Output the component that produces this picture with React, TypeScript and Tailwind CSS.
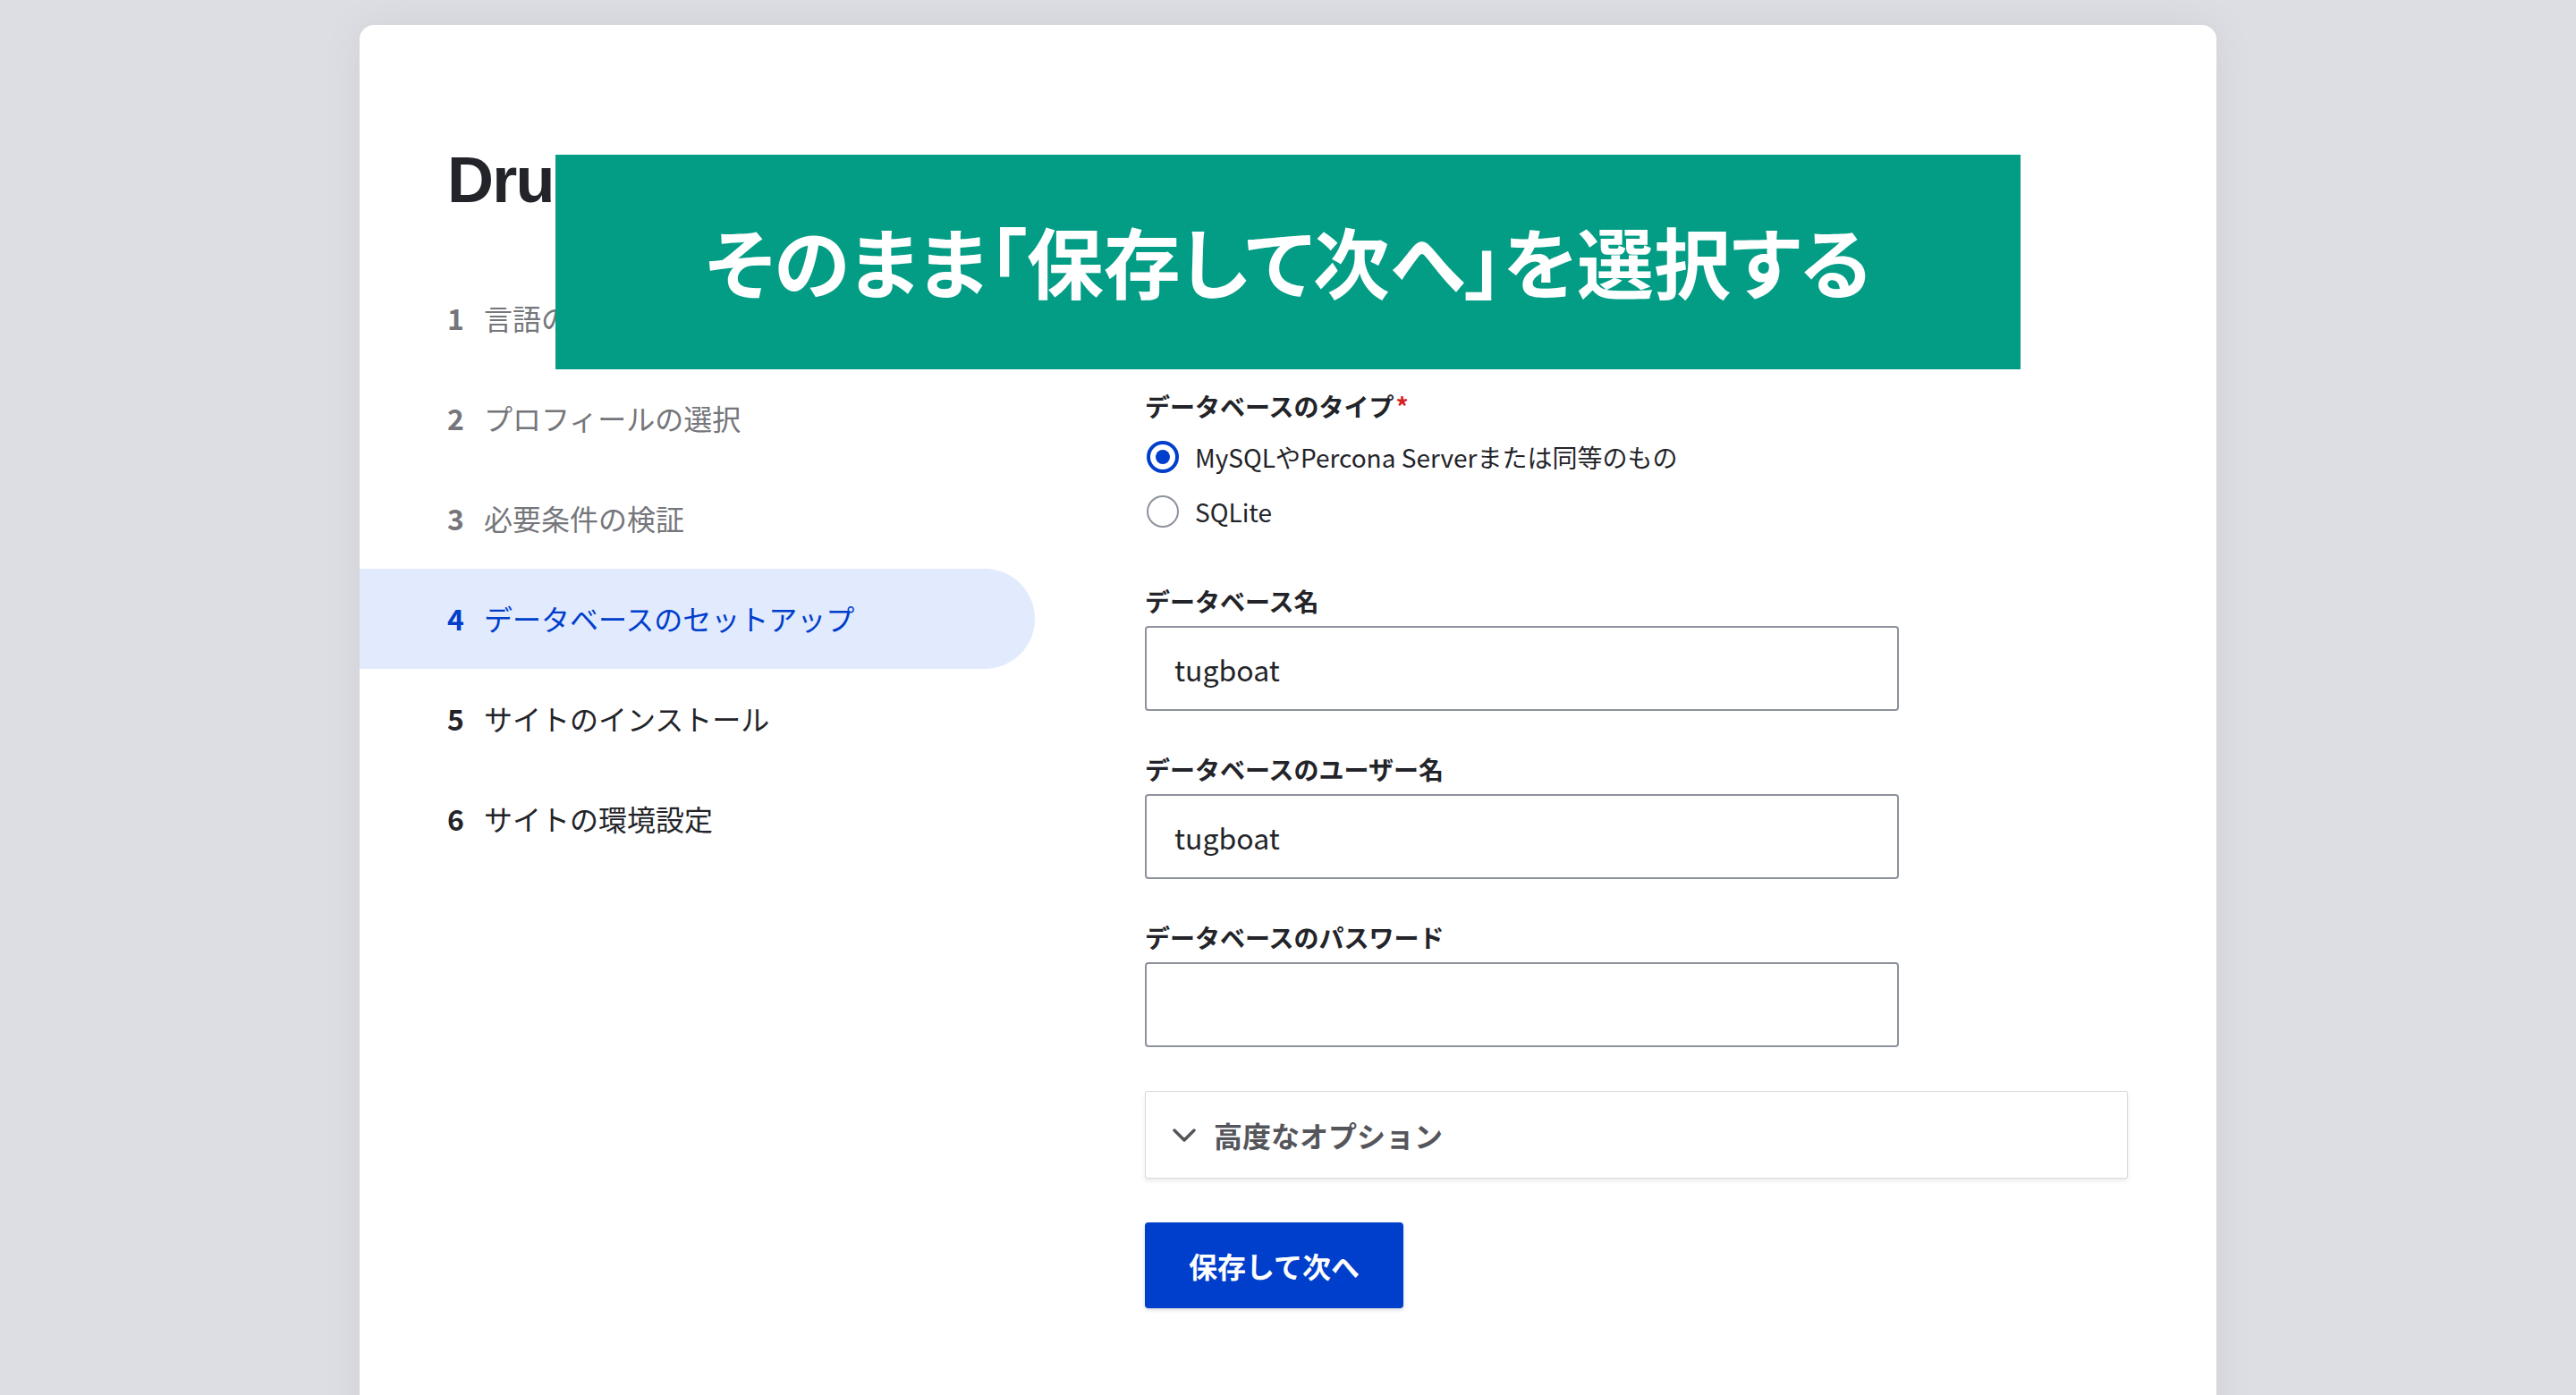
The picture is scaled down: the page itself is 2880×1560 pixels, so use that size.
import React from "react";

// Drupal installer — database setup step, with a tutorial banner laid over it

const STEPS = [
  { n: 1, label: "言語の選択", state: "done" },
  { n: 2, label: "プロフィールの選択", state: "done" },
  { n: 3, label: "必要条件の検証", state: "done" },
  { n: 4, label: "データベースのセットアップ", state: "active" },
  { n: 5, label: "サイトのインストール", state: "todo" },
  { n: 6, label: "サイトの環境設定", state: "todo" },
];

function StepItem({ n, label, state }: { n: number; label: string; state: string }) {
  const tone =
    state === "active"
      ? "bg-[#e2eafd] rounded-r-full text-[#003ecc]"
      : state === "done"
        ? "text-[#75767b]"
        : "text-[#232429]";
  return (
    <li className={`flex items-center h-[112px] pl-[98px] pb-[3px] text-[32px] ${tone}`}>
      <span className="font-semibold mr-[22px]">{n}</span>
      <span>{label}</span>
    </li>
  );
}

function Field({ label, value }: { label: string; value: string }) {
  return (
    <div className="mb-[45px]">
      <label className="block text-[28px] leading-[40px] font-bold text-[#232429] mb-[8px]">
        {label}
      </label>
      <div className="flex items-center w-[843px] h-[95px] border-2 border-[#8e929c] rounded-[4px] px-[31px] text-[32px] text-[#232429]">
        {value}
      </div>
    </div>
  );
}

export default function App() {
  return (
    <div className="h-[1560px] overflow-hidden bg-[#dddee3] pt-[28px] font-['Noto_Sans_CJK_JP',sans-serif]">
      <div className="relative mx-auto w-[2076px] h-[1600px] rounded-[16px] bg-white shadow-[0_0_50px_rgba(0,0,0,0.06)]">
        {/* Header */}
        <div className="pl-[98px] pt-[137px]">
          <h1 className="text-[72px] leading-[72px] font-bold tracking-tight text-[#232429] font-['Liberation_Sans',sans-serif]">
            Drupal
          </h1>
        </div>

        <div className="flex mt-[63px]">
          {/* Steps */}
          <nav className="w-[755px]">
            <ol>
              {STEPS.map((s) => (
                <StepItem key={s.n} {...s} />
              ))}
            </ol>
          </nav>

          {/* Form */}
          <form className="ml-[123px] pt-[134px] flex flex-col items-start">
            <div className="mb-[50px]">
              <div className="text-[28px] leading-[40px] font-bold text-[#232429] mb-[6px]">
                データベースのタイプ<span className="text-[#d72222] ml-[2px]">*</span>
              </div>
              <div className="flex items-center h-[61px] gap-[18px] pl-[2px]">
                <span className="flex items-center justify-center w-[36px] h-[36px] rounded-full border-[4px] border-[#003ecc]">
                  <span className="w-[16px] h-[16px] rounded-full bg-[#003ecc]" />
                </span>
                <span className="text-[28px] text-[#232429]">MySQLやPercona Serverまたは同等のもの</span>
              </div>
              <div className="flex items-center h-[61px] gap-[18px] pl-[2px]">
                <span className="w-[36px] h-[36px] rounded-full border-2 border-[#8e929c]" />
                <span className="text-[28px] text-[#232429]">SQLite</span>
              </div>
            </div>

            <Field label="データベース名" value="tugboat" />
            <Field label="データベースのユーザー名" value="tugboat" />
            <Field label="データベースのパスワード" value="" />

            <div className="flex items-center w-[1099px] h-[98px] mt-[4px] border border-[#d8d9e0] rounded-[2px] shadow-[0_3px_5px_rgba(0,0,0,0.08)] pl-[30px]">
              <svg width="26" height="15" viewBox="0 0 26 15" fill="none" className="mr-[20px]">
                <path d="M2 2 L13 13 L24 2" stroke="#55565b" strokeWidth="3.5" strokeLinecap="round" strokeLinejoin="round" />
              </svg>
              <span className="text-[32px] font-bold text-[#55565b]">高度なオプション</span>
            </div>

            <button
              type="button"
              className="mt-[49px] h-[96px] px-[49px] rounded-[4px] bg-[#003ecc] text-white text-[32px] font-bold shadow-[0_2px_4px_rgba(0,0,0,0.15)]"
            >
              保存して次へ
            </button>
          </form>
        </div>

        {/* Tutorial banner over the page */}
        <div className="absolute left-[219px] top-[145px] w-[1638px] h-[240px] bg-[#039d86] flex items-center justify-center pb-[6px]">
          <span className="text-white text-[86px] font-bold [font-feature-settings:'palt']">
            そのまま「保存して次へ」を選択する
          </span>
        </div>
      </div>
    </div>
  );
}
